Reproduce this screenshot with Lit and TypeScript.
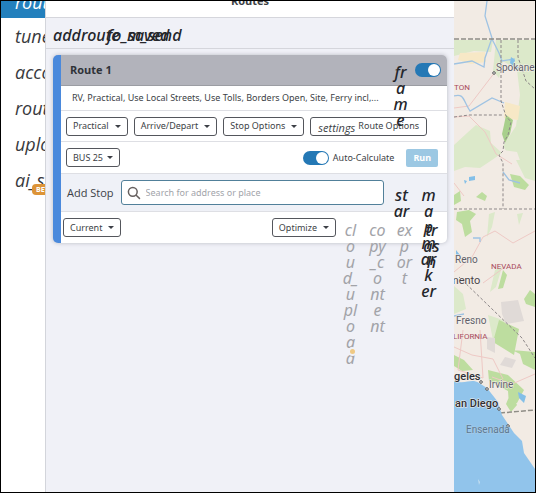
import { LitElement, html, css, svg } from "lit";
import { customElement, property } from "lit/decorators.js";

@customElement("region-map")
class RegionMap extends LitElement {
  static styles = css`
    :host { display: block; overflow: hidden; background: #f2ebe4; }
    svg { display: block; width: 100%; height: 100%; }
    .green { fill: #dce9ca; }
    .park { fill: #bddd9f; }
    .wood { fill: #a8cf8c; }
    .sand { fill: #f7e8c6; }
    .town { fill: #e0dad7; }
    .sea { fill: #91c4eb; }
    .river { fill: none; stroke: #9fc3e3; stroke-width: 1.3; }
    .road { fill: none; stroke: #eec9c5; stroke-width: 1; }
    .state { fill: none; stroke: #8d8788; stroke-width: 1; stroke-dasharray: 3 2; }
    .nation { fill: none; stroke: #8f8d86; stroke-width: 1.5; stroke-dasharray: 5 2; }
    .dot { fill: #fff; stroke: #555; stroke-width: 1; }
    text { font-family: Roboto, sans-serif; font-size: 10px; fill: #606068; paint-order: stroke; stroke: #f6f1ec; stroke-width: 1px; }
    .name { fill: #a84a5c; font-size: 8px; stroke: none; }
    .city { fill: #303036; font-size: 11px; font-weight: 500; }
    .big { fill: #4a4448; font-size: 11px; }
    .coast { stroke: #a9cce8; fill: #5d7890; }
  `;

  render() {
    return html`<svg viewBox="454 1 81 491" preserveAspectRatio="xMinYMin slice" role="img" aria-label="Map">
      ${svg`
      <rect x="454" y="1" width="600" height="491" fill="#f2ebe4"/>
      <path class="green" d="M454 40h39l-2 12-17-1-20 5zM496 40h39v167h-12l-9-10-3-24 1-13-9-14 13-20 4-31-3-25-14-9-4 17-6-7zM454 145l13-12 9-8 14 6 1 12 11 10-10 7-12 8-15-1-11 4zM516 160h19v21l-10-3zM454 286l9 8 3 15-12 5zM488 315l15 5 9 15-2 12-17-7z"/>
      <path fill="#f2ebe4" d="M503 150l14 2 5 14 13 12v29h-32z"/>
      <path class="green" d="M516 160h19v21l-10-3zM489 214l6-2-3 15-5 10zM517 214l6-1-4 12zM495 270l7-3-6 20-6 5z"/>
      <path class="sand" d="M460 53l25-1 1 10-15 2-13-4zM505 102l15 4-2 14-14-2z"/>
      <path class="wood" d="M506 115l7 5-3 14-5 9-3-9 2-9z"/>
      <path class="park" d="M510 174l10 2 9 9-4 5-11-3zM454 195l6-4 1 10-7 4zM457 212l12-2 7 4-6 7 2 11-7 5-3-13-6-4zM476 197l6-5 5 4-2 5zM503 270l4 5-4 13-5 1zM524 299l6-9 5 4v13l-9-3zM499 320l20 9-5 26-21-13zM454 355l10 5 9 10-11 1-8-5zM488 370l20 5 16 15-7 13-8 2-1-14-19-10zM511 392l6 13-6 7-5-8zM512 350l23 2v18l-12-6-3-10z"/>
      <path class="town" d="M501 302l17-2 6 21-18 3-4-10zM487 337l8 1v15l-8-4zM505 357l11 3-4 8-12-3z"/>
      <path class="road" d="M454 108l15-2 26-34M454 117l15-1 16 16 11 22 16 10M454 183l10 13M454 272l18-15 11-20 12-6 18 12 22-12M463 330l-5 40 25 8M480 330l3 48M492 377l20 7 23-10M483 283l22-16M454 347l18 8 21 4 10 20"/>
      <path class="river" d="M487 1l-2 15 7 22-7 20-1 9-12-6-18 3M492 39l7 14 3 8 12-2-1 7 6 2M454 96c10-3 9 4 16 15l22-13 12 5M503 172l6 8 11 3M473 238h7v4M454 316l10-2"/>
      <path fill="#83bfe8" d="M469 177l6-1v4l-6 1zM464 180l3 1-2 3zM456 250l4 5-4 2zM518 392l8 4-2 7-5-5zM511 57l4 3-2 6-3-3z"/>
      <path class="nation" d="M454 39h81M500 413l35-3"/>
      <path class="state" d="M501 40v61l5 15 5 6-3 13-4 7-1 9-4 4 4 8v46M518 40v17l8 24 9 8M454 117l15-2h33M454 209h81M459 277l63 61 13 20"/>
      <path class="sea" d="M454 381c12 4 17-3 25 2l8 5 11 14 4 13 12 18 8 8 2 12 11 16v23h-81z"/>
      <path d="M478 479l2 3-1 3z" fill="#c7e0f0"/>
      <circle class="dot" cx="494" cy="73" r="1.3"/><circle class="dot" cx="481" cy="382" r="1.3"/>
      <circle class="dot" cx="487" cy="389" r="1.3"/><circle class="dot" cx="499" cy="409" r="1.3"/><circle class="dot" cx="508" cy="426" r="1.3"/>
      <text x="496" y="71">Spokane</text><text class="name" x="454" y="90">TON</text>
      <text x="455" y="263">Reno</text><text class="name" x="491" y="269">NEVADA</text>
      <text class="big" x="449" y="284">mento</text><text x="456" y="324">Fresno</text>
      <text class="name" x="453" y="339">LIFORNIA</text><text class="city" x="454" y="380">geles</text>
      <text x="489" y="388">Irvine</text><text class="city" x="455" y="407">an Diego</text>
      <text class="coast" x="466" y="433">Ensenada</text>`}
    </svg>`;
  }
}

@customElement("toggle-switch")
class ToggleSwitch extends LitElement {
  @property() label = "";
  @property() caption = "";
  static styles = css`
    :host { display: block; }
    label { display: flex; align-items: center; gap: 4px; }
    input { appearance: none; box-sizing: border-box; width: 26px; height: 14px; margin: 0; padding: 1px; border-radius: 7px; background: #2478b5; display: flex; justify-content: flex-end; }
    input::before { content: ""; width: 12px; height: 12px; border-radius: 50%; background: #fff; }
    input:not(:checked) { justify-content: flex-start; background: #999; }
  `;
  render() {
    return html`<label><input type="checkbox" role="switch" checked aria-label=${this.label} />${this.caption}</label>`;
  }
}

@customElement("app-root")
class AppRoot extends LitElement {
  static styles = css`
    :host {
      display: grid; grid-template-columns: 45px minmax(0, 408px) minmax(81px, 1fr);
      box-sizing: border-box; min-height: 100vh; border: 1px solid #000; background: #fff;
      font: 9px/16px "Noto Sans", "Open Sans", sans-serif; color: #3c3f46;
    }
    button { font: inherit; color: inherit; margin: 0; }
    .side { overflow: hidden; border-right: 1px solid #d3d5db; }
    .side a { display: block; height: 36px; padding-left: 14px; font: italic 18px/36px "Open Sans", sans-serif; color: #38393d; text-decoration: none; white-space: nowrap; }
    .side .active { height: 17px; line-height: 2px; background: #2380bd; color: #fff; overflow: hidden; }
    .side .beta { position: relative; }
    .badge { position: absolute; left: 31px; top: 22px; padding: 0 4px; border-radius: 4px; background: #dd9437; color: #fff; font: bold 7px/11px "Open Sans", sans-serif; }
    main { background: #f0f1f7; min-width: 0; }
    header { display: flex; justify-content: center; align-items: flex-end; height: 17px; box-sizing: border-box; padding-bottom: 9px; overflow: hidden; background: #fff; border-bottom: 1px solid #d5d6dc; }
    h1 { margin: 0; font: bold 11px/14px "Open Sans", sans-serif; }
    .tools { display: grid; grid-template-columns: 28px 26px 20px 1fr; align-items: center; box-sizing: border-box; height: 31px; padding-left: 7px; border-bottom: 1px solid #d5d6dc; }
    .glyph { box-sizing: border-box; height: 20px; padding: 4px 0 0; border: 0; background: none; font: italic 500 16px/16px "Noto Sans", "Open Sans", sans-serif; color: #24262b; white-space: nowrap; text-align: left; }
    .stack { position: relative; z-index: 1; flex: none; width: 17px; display: block; overflow: visible; }
    .stack span { display: flex; flex-direction: column; align-items: center; }
    .pale { color: #a2a3a8; font-weight: normal; }
    .card { margin: 6px 7px 0; border-left: 8px solid #4a89dc; border-radius: 5px; background: #fff; box-shadow: 0 0 4px #b8bac3; }
    .row { display: flex; align-items: center; box-sizing: border-box; height: 31px; padding: 0 9px 0 5px; border-bottom: 1px solid #dedfe4; gap: 6px; }
    .title { background: #b2b3bb; border-radius: 0 5px 0 0; border-color: #9b9da3; padding: 0 6px 0 9px; }
    h2 { margin: 0; flex: 1; font: bold 11px/16px "Open Sans", sans-serif; color: #2f3238; }
    .summary { height: 25px; padding-left: 11px; white-space: nowrap; }
    .push { flex: 1; }
    .drop, .plain { display: flex; align-items: center; gap: 6px; box-sizing: border-box; height: 19px; padding: 0 6px; border: 1px solid #54565c; border-radius: 3px; background: #fff; white-space: nowrap; }
    .drop::after { content: ""; border: 3px solid transparent; border-top-color: #3c3f46; border-bottom: 0; }
    .plain { gap: 3px; padding: 0 7px; }
    .plain i { font: italic 11px/16px "Open Sans", sans-serif; padding-top: 3px; }
    .run { height: 18px; padding: 0 7px; border: 0; border-radius: 2px; background: #9cc8e3; color: #fff; font-weight: bold; }
    .auto { gap: 12px; height: 32px; }
    .auto .drop { gap: 4px; }
    .add { height: 38px; background: #eff1f7; padding: 0 10px 0 6px; gap: 7px; }
    .add label { font: 11px/16px "Open Sans", sans-serif; }
    .search { flex: 1; min-width: 0; display: flex; align-items: center; gap: 5px; height: 25px; box-sizing: border-box; margin-right: 2px; padding: 0 5px; border: 1px solid #51809a; border-radius: 3px; background: #fff; }
    .search input { flex: 1; min-width: 0; border: 0; padding: 0; outline: 0; background: none; font: inherit; color: #333; }
    .search input::placeholder { color: #a2a4aa; }
    .search svg { width: 14px; height: 14px; fill: none; stroke: #66605f; stroke-width: 1.6; }
    .icons { display: flex; gap: 10px; }
    .foot { border: 0; padding: 0 7px 0 2px; }
    .dot { position: absolute; left: 8px; top: 131px; width: 5px; height: 5px; border-radius: 50%; background: #efc984; box-shadow: 0 0 0 2px #f0f1f7; }
  `;

  private drop(text: string) {
    return html`<button class="drop">${text}</button>`;
  }

  /* Icon name broken into the short lines that fit its narrow slot. */
  private stack(lines: string, tone = "", extra: unknown = "") {
    return html`<button class="glyph stack ${tone}" aria-label=${lines.replace(/ /g, "")}>
      <span>${lines.split(" ").map((t) => html`<b style="font-weight:inherit">${t}</b>`)}</span>${extra}
    </button>`;
  }

  render() {
    return html`
      <nav class="side">
        <a class="active" href="#">route</a>
        ${["tune", "account", "route", "upload"].map((t) => html`<a href="#">${t}</a>`)}
        <a class="beta" href="#">ai_spark<span class="badge">BETA</span></a>
      </nav>
      <main>
        <header><h1>Routes</h1></header>
        <div class="tools">
          ${["add", "route", "fo_saved", "m_send"].map((t) => html`<button class="glyph">${t}</button>`)}
        </div>
        <section class="card">
          <div class="row title">
            <h2>Route 1</h2>${this.stack("fr a m e")}
            <toggle-switch label="Route 1 visible"></toggle-switch>
          </div>
          <div class="row summary">RV, Practical, Use Local Streets, Use Tolls, Borders Open, Site, Ferry incl,...</div>
          <div class="row">
            ${["Practical", "Arrive/Depart", "Stop Options"].map((t) => this.drop(t))}
            <button class="plain"><i>settings</i>Route Options</button>
          </div>
          <div class="row auto">
            ${this.drop("BUS 25")}<span class="push"></span>
            <toggle-switch caption="Auto-Calculate" label="Auto-Calculate"></toggle-switch>
            <button class="run">Run</button>
          </div>
          <div class="row add">
            <label for="stop">Add Stop</label>
            <div class="search">
              <svg viewBox="0 0 15 15"><circle cx="6.2" cy="6.2" r="4.7"/><path d="M9.6 9.6l4.2 4.2"/></svg>
              <input id="stop" placeholder="Search for address or place" />
            </div>
            <div class="icons">${this.stack("st ar")}${this.stack("m a p m ar k er")}</div>
          </div>
          <div class="row foot">
            ${this.drop("Current")}<span class="push"></span>${this.drop("Optimize")}
            <div class="icons">
              ${this.stack("cl o u d_ u pl o a d", "pale", html`<span class="dot"></span>`)}
              ${this.stack("co py _c o nt e nt", "pale")}${this.stack("ex p or t", "pale")}${this.stack("tr as h")}
            </div>
          </div>
        </section>
      </main>
      <region-map></region-map>
    `;
  }
}
